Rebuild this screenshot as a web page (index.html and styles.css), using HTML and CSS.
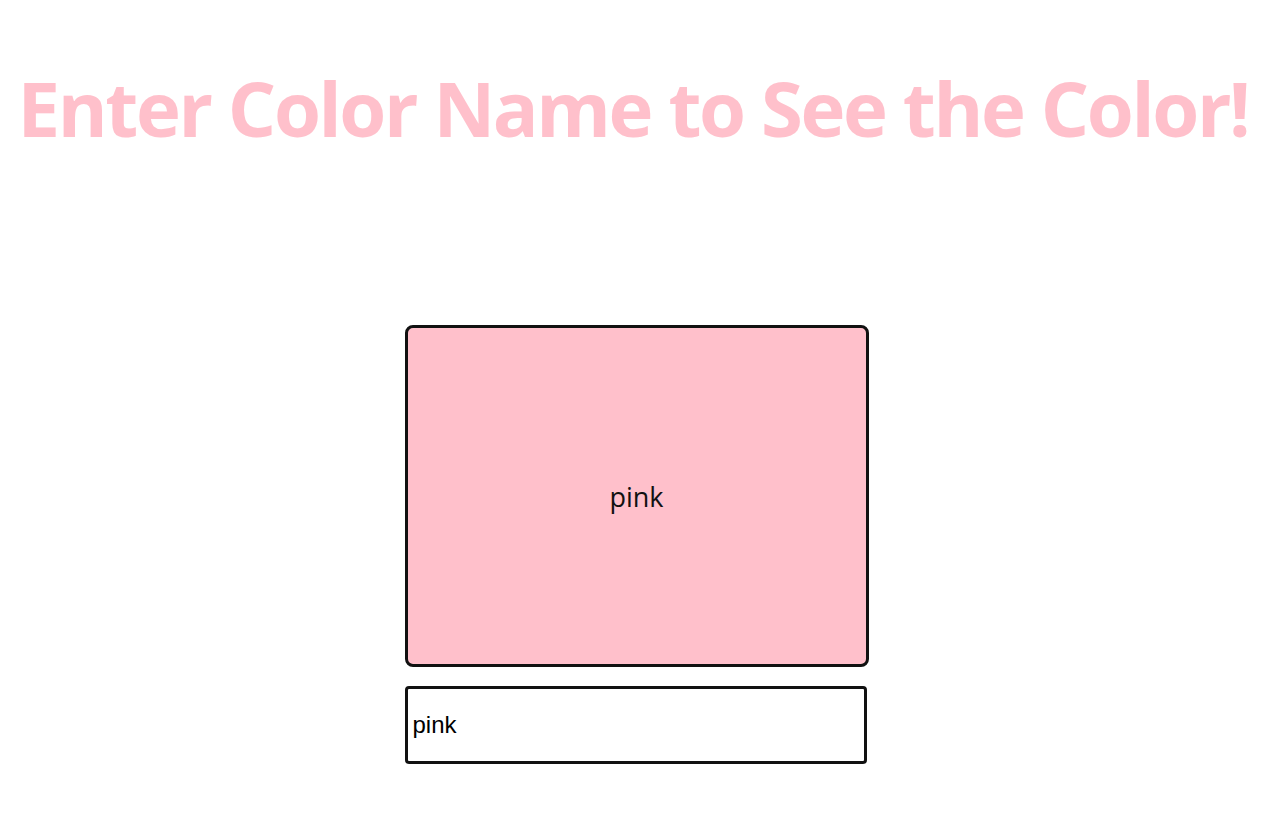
FILE: index.html
```html
<!DOCTYPE html>
<html lang="en">
<head>
<meta charset="utf-8">
<title>Color Viewer</title>
<link rel="stylesheet" href="styles.css">
</head>
<body>
<h1 class="title">Enter Color Name to See the Color!</h1>
<main class="stage">
  <div class="swatch">pink</div>
  <input class="color-input" type="text" value="pink">
</main>
</body>
</html>
```
FILE: styles.css
```css
html, body {
  margin: 0;
  padding: 0;
  background: #fff;
}
body {
  font-family: "Open Sans", "Noto Sans", sans-serif;
}
.title {
  margin: 0;
  padding-top: 64px;
  padding-right: 14px;
  text-align: center;
  color: #ffc0cb;
  font-size: 76px;
  font-weight: 700;
  line-height: 88px;
  letter-spacing: -2.4px;
  white-space: nowrap;
}
.stage {
  display: flex;
  flex-direction: column;
  align-items: center;
  padding-top: 173px;
  padding-right: 7px;
  gap: 19px;
}
.swatch {
  box-sizing: border-box;
  width: 464px;
  height: 342px;
  background: #ffc0cb;
  border: 3px solid #111;
  border-radius: 8px;
  display: flex;
  align-items: center;
  justify-content: center;
  font-size: 27px;
  color: #111;
}
.color-input {
  box-sizing: border-box;
  width: 462px;
  height: 78px;
  margin-right: 2px;
  border: 3px solid #111;
  border-radius: 4px;
  padding: 0 5px;
  font-family: "Liberation Sans", Arial, sans-serif;
  font-size: 24px;
  color: #000;
  background: #fff;
  outline: none;
}
```
